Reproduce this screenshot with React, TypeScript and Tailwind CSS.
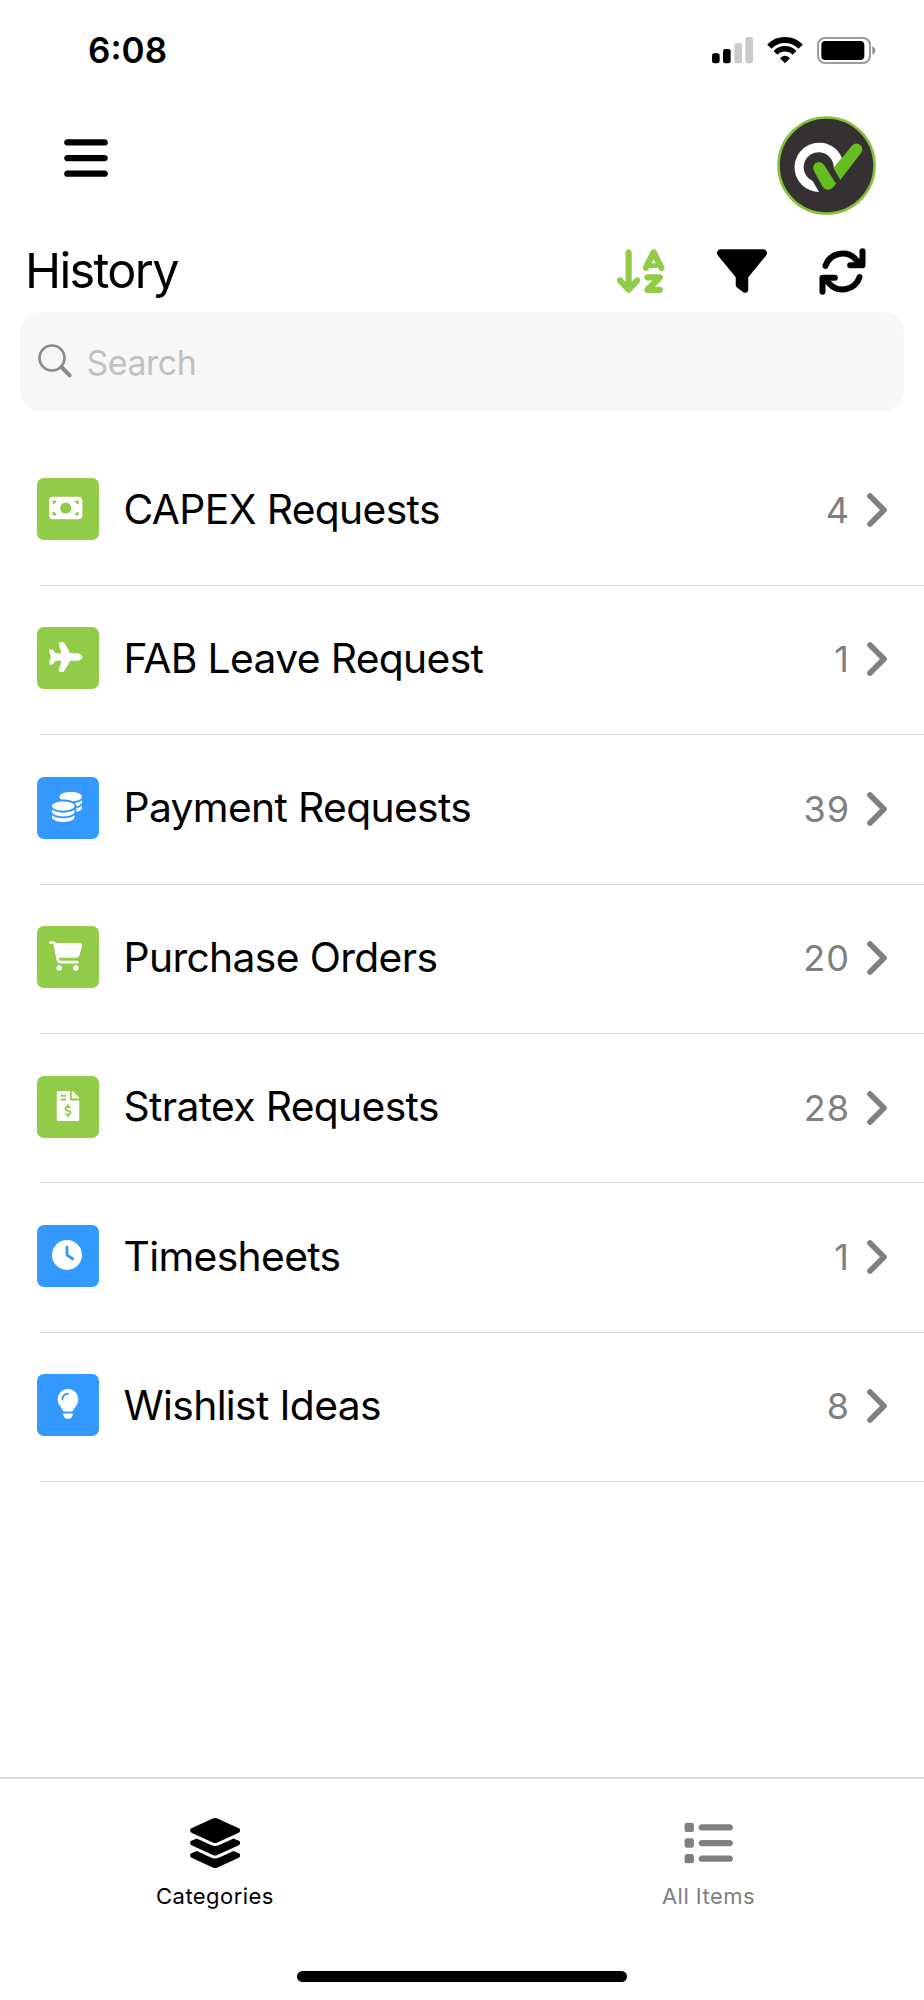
import React, { useState } from 'react';
import { IconType } from "react-icons";
import { FaFileInvoiceDollar } from "react-icons/fa";
import {
    FaArrowDownAZ,
    FaBars,
    FaCartShopping,
    FaClock,
    FaCoins,
    FaFilter,
    FaLayerGroup,
    FaLightbulb,
    FaList,
    FaMoneyBill,
    FaPlane,
} from "react-icons/fa6";

interface Category {
    label: string;
    count: number;
    icon: IconType;
    iconClass: string;
    color: string;
}

const categories: Category[] = [
    { label: 'CAPEX Requests', count: 4, icon: FaMoneyBill, iconClass: 'w-[33.4px] h-[30px] ml-[-4px]', color: 'bg-[#91cb48]' },
    { label: 'FAB Leave Request', count: 1, icon: FaPlane, iconClass: 'w-[33.4px] h-[30px] ml-[-4px]', color: 'bg-[#91cb48]' },
    { label: 'Payment Requests', count: 39, icon: FaCoins, iconClass: 'w-[30px] h-[30px] ml-[-3px]', color: 'bg-[#3399ff]' },
    { label: 'Purchase Orders', count: 20, icon: FaCartShopping, iconClass: 'w-[33.4px] h-[30px] ml-[-4px]', color: 'bg-[#91cb48]' },
    { label: 'Stratex Requests', count: 28, icon: FaFileInvoiceDollar, iconClass: 'w-[30px] h-[30px]', color: 'bg-[#91cb48]' },
    { label: 'Timesheets', count: 1, icon: FaClock, iconClass: 'w-[30px] h-[30px] ml-[-3px]', color: 'bg-[#3399ff]' },
    { label: 'Wishlist Ideas', count: 8, icon: FaLightbulb, iconClass: 'w-[30px] h-[30px]', color: 'bg-[#3399ff]' },
];

const StatusBar = () => (
    <div className="h-[101px] flex items-center justify-between pl-[88px] pr-12">
        <div className="text-[35px] font-semibold leading-none">6:08</div>
        <div className="flex items-center">
            <svg className="w-[41px] h-[27px]" viewBox="0 0 123 81">
                <rect x="0" y="49" width="23" height="30" rx="7" fill="#000" />
                <rect x="33" y="36" width="23" height="43" rx="7" fill="#000" />
                <rect x="67" y="18" width="23" height="61" rx="7" fill="#cbcbcb" />
                <rect x="100" y="0" width="23" height="79" rx="7" fill="#cbcbcb" />
            </svg>
            <svg className="w-9 h-[27px] ml-[14.5px]" viewBox="0 0 108 81">
                <path d="M7 29A66 66 0 0 1 101 29" fill="none" stroke="#000" strokeWidth="18" />
                <path d="M25.4 47.4A40 40 0 0 1 82.6 47.4" fill="none" stroke="#000" strokeWidth="16" />
                <path d="M54 79L39 64Q45 56 54 56T69 64Z" fill="#000" />
            </svg>
            <svg className="w-[59px] h-[27px] ml-[14px]" viewBox="0 0 177 81">
                <rect x="3" y="3" width="156" height="75" rx="21" fill="none" stroke="#9c9c9c" strokeWidth="6" />
                <rect x="13" y="12" width="129" height="57" rx="12" fill="#000" />
                <path d="M166 27Q175 32 175 40T166 53Z" fill="#8c8c8c" />
            </svg>
        </div>
    </div>
);

const Logo = () => (
    <svg className="w-[99px] h-[99px]" viewBox="290 346 297 297">
        <circle cx="438.5" cy="494.5" r="144" fill="#353132" stroke="#84c13c" strokeWidth="8" />
        <path d="M416 574A74 74 0 1 1 485 472L460 502A45 45 0 1 0 397 541Z" fill="#fff" />
        <path d="M401 511C394 496 404 484 416 484Q426 485 432 494L467 549Q455 567 443 567Q433 567 427 558Z" fill="#65bd20" />
        <path d="M460 503L514 436Q526 424 539 432Q551 442 542 457L480 538Z" fill="#65bd20" />
    </svg>
);

const Refresh = () => (
    <svg
        className="w-[47px] h-[47px] ml-[52px] mr-[2.5px]"
        viewBox="717.5 83.5 141 141"
        fill="none"
        stroke="currentColor"
        strokeWidth="18"
        strokeLinecap="round"
        strokeLinejoin="round"
    >
        <path d="M737 137A54 54 0 0 1 828 118L845 135M848 93V135H811" />
        <path d="M839 171A54 54 0 0 1 748 190L731 173M728 215V173H765" />
    </svg>
);

const CategoryRow = ({ label, count, icon: Icon, iconClass, color }: Category) => (
    <div className="h-[149.4px] ml-10 flex items-center pb-[3px] border-b border-[#d8d8d8]">
        <div className={`w-[62px] h-[62px] ml-[-3px] rounded-[7px] text-white flex items-center justify-center pb-[2px] ${color}`}>
            <Icon className={iconClass} />
        </div>
        <div className="ml-[24.5px] flex-1 text-[40.8px] leading-none tracking-[-0.65px]">{label}</div>
        <div className="mt-[2px] text-[36px] leading-none tracking-[1px] text-[#808080]">{count}</div>
        <svg className="w-5 h-[34px] ml-[17px] mr-[37px] mt-[2px] text-[#808080]" viewBox="0 0 60 102" fill="none" stroke="currentColor">
            <path d="M9 9L51 51L9 93" strokeWidth="17" strokeLinecap="round" strokeLinejoin="round" />
        </svg>
    </div>
);

export default function App() {
    const [tab, setTab] = useState('categories');
    const [search, setSearch] = useState('');

    return (
        <div className="w-full h-[2000px] flex flex-col bg-white text-black overflow-hidden font-['Inter',sans-serif]">
            <StatusBar />

            <div className="h-[129px] flex items-start justify-between pl-[60.5px] pr-[48.5px]">
                <button className="mt-[32px]"><FaBars className="w-[50px] h-[50px]" /></button>
                <div className="mt-[14.5px]"><Logo /></div>
            </div>

            <div className="h-[82px] flex items-center pl-[25px] pr-14">
                <h1 className="flex-1 mt-[1px] text-[48.6px] leading-none tracking-[-1.65px]">History</h1>
                <FaArrowDownAZ className="w-[56.25px] h-[50px] text-[#91cb48]" />
                <FaFilter className="w-[50px] h-[50px] ml-[47.5px]" />
                <Refresh />
            </div>

            <div className="h-[99px] mx-5 pl-[18px] flex items-center rounded-[20px] bg-[#f7f7f7]">
                <svg className="w-[34px] h-[34px] mt-[-1px]" viewBox="0 0 102 102" fill="none" stroke="#8a8a8d">
                    <circle cx="42" cy="42" r="37.5" strokeWidth="8" />
                    <path d="M70 69L95 94" strokeWidth="12" strokeLinecap="round" />
                </svg>
                <input
                    value={search}
                    onChange={(e) => setSearch(e.target.value)}
                    placeholder="Search"
                    className="ml-[14.5px] mt-[1px] flex-1 h-12 text-[34px] tracking-[-0.5px] outline-none placeholder:text-[#c1c1c3]"
                />
            </div>

            <div className="mt-[25.4px] flex-1">
                {categories.map((category) => (
                    <CategoryRow key={category.label} {...category} />
                ))}
            </div>

            <div className="h-[223px] flex flex-col justify-between border-t-[2px] border-[#dedede]">
                <div className="flex pl-[17.5px] pr-[18px] pt-[39px]">
                    <button
                        onClick={() => setTab('categories')}
                        className={`w-[395px] flex flex-col items-center ${tab === 'categories' ? 'text-black' : 'text-[#808080]'}`}
                    >
                        <FaLayerGroup className="w-[56.25px] h-[50px]" />
                        <span className="mt-[17px] text-[22px] leading-none tracking-[0.46px]">Categories</span>
                    </button>
                    <button
                        onClick={() => setTab('all')}
                        className={`w-[395px] ml-auto flex flex-col items-center ${tab === 'all' ? 'text-black' : 'text-[#808080]'}`}
                    >
                        <FaList className="w-[50px] h-[50px] mr-[1px]" />
                        <span className="mt-[17px] text-[22px] leading-none tracking-[0.46px]">All Items</span>
                    </button>
                </div>
                <div className="w-[330px] h-[11px] mx-auto mb-[18px] rounded-full bg-black"></div>
            </div>
        </div>
    );
}
